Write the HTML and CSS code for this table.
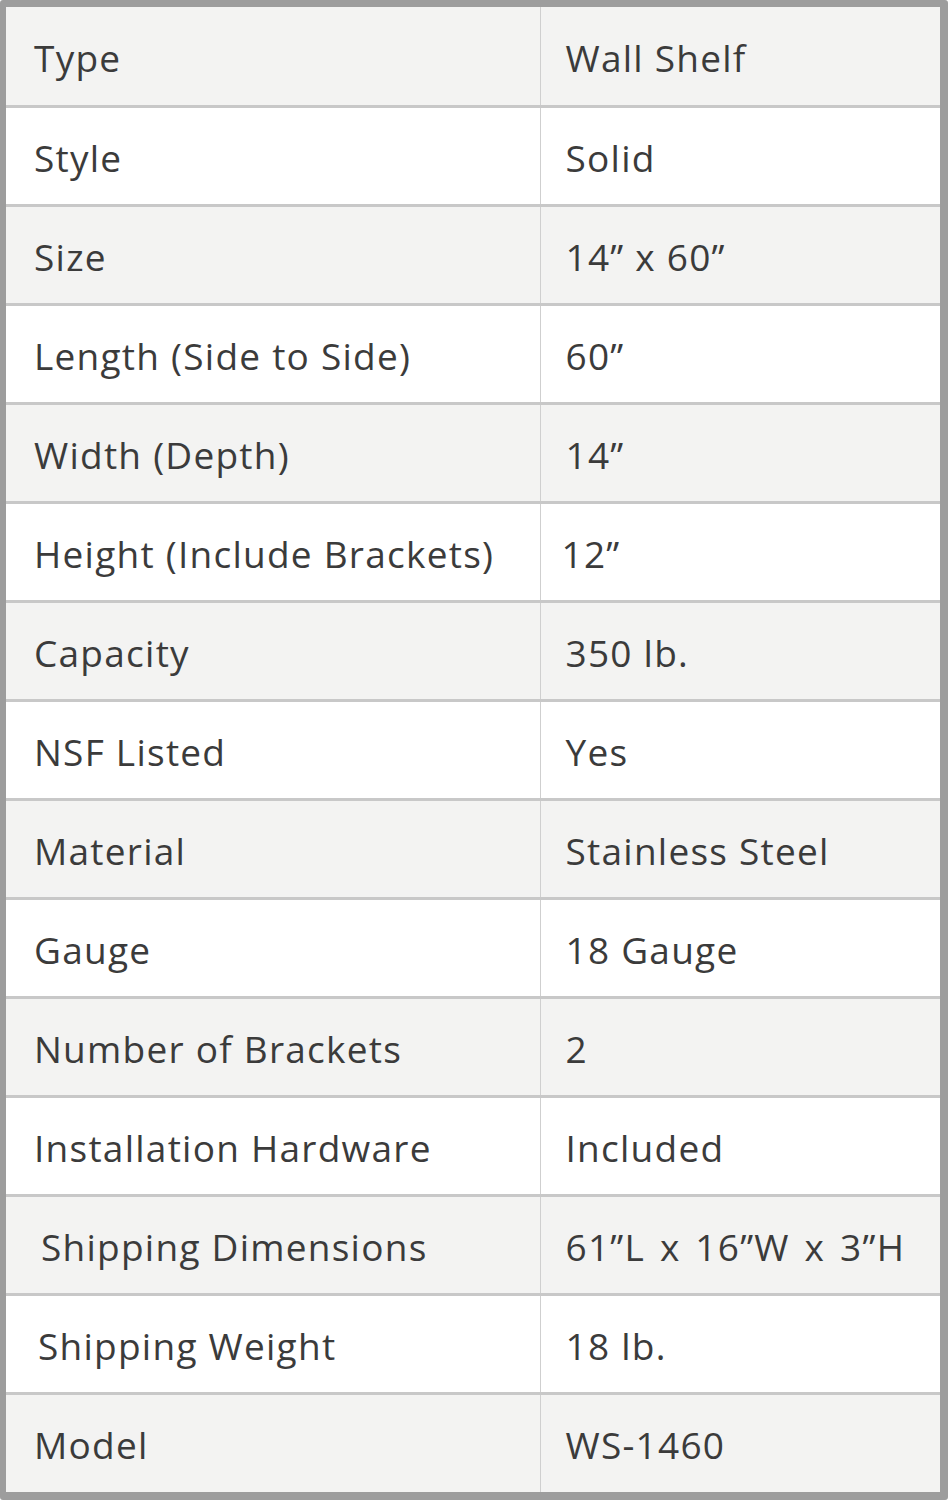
FILE: index.html
```html
<!DOCTYPE html>
<html>
<head>
<meta charset="utf-8">
<link rel="stylesheet" href="styles.css">
</head>
<body>
<div class="frame">
<table class="specs">
<tr class="odd"><td class="k">Type</td><td class="v">Wall Shelf</td></tr>
<tr><td class="k">Style</td><td class="v">Solid</td></tr>
<tr class="odd"><td class="k">Size</td><td class="v">14” x 60”</td></tr>
<tr><td class="k">Length (Side to Side)</td><td class="v">60”</td></tr>
<tr class="odd"><td class="k">Width (Depth)</td><td class="v">14”</td></tr>
<tr><td class="k">Height (Include Brackets)</td><td class="v shift-l">12”</td></tr>
<tr class="odd"><td class="k">Capacity</td><td class="v">350 lb.</td></tr>
<tr><td class="k">NSF Listed</td><td class="v">Yes</td></tr>
<tr class="odd"><td class="k">Material</td><td class="v">Stainless Steel</td></tr>
<tr><td class="k">Gauge</td><td class="v">18 Gauge</td></tr>
<tr class="odd"><td class="k">Number of Brackets</td><td class="v">2</td></tr>
<tr><td class="k">Installation Hardware</td><td class="v">Included</td></tr>
<tr class="odd"><td class="k shift-r">Shipping Dimensions</td><td class="v wide">61”L x 16”W x 3”H</td></tr>
<tr><td class="k shift-r2">Shipping Weight</td><td class="v">18 lb.</td></tr>
<tr class="odd"><td class="k">Model</td><td class="v">WS-1460</td></tr>
</table>
</div>
</body>
</html>
```
FILE: styles.css
```css
html, body {
  margin: 0;
  padding: 0;
  background: #ffffff;
}
.frame {
  width: 948px;
  height: 1500px;
  box-sizing: border-box;
  border-style: solid;
  border-color: #9d9d9d;
  border-width: 7px 8px 8px 6px;
  border-radius: 3px;
  overflow: hidden;
}
.specs {
  width: 100%;
  height: 100%;
  border-collapse: collapse;
  font-family: "Open Sans", "Noto Sans", sans-serif;
  font-size: 37px;
  color: #3b3b3b;
  letter-spacing: 1.25px;
}
.specs tr {
  background: #ffffff;
  height: 96px;
}
.specs tr.odd {
  background: #f3f3f2;
}
.specs tr + tr td {
  border-top: 3px solid #c8c8c8;
}
.specs td {
  padding: 3px 0 0 0;
  vertical-align: middle;
  white-space: nowrap;
}
.specs td.k {
  width: 534px;
  padding-left: 28px;
  border-right: 1px solid #cfcfcf;
  box-sizing: border-box;
}
.specs td.v {
  padding-left: 25px;
}
.specs td.shift-l {
  padding-left: 21px;
}
.specs td.shift-r {
  padding-left: 35px;
}
.specs td.shift-r2 {
  padding-left: 32px;
}
.specs td.wide {
  word-spacing: 4px;
}
```
